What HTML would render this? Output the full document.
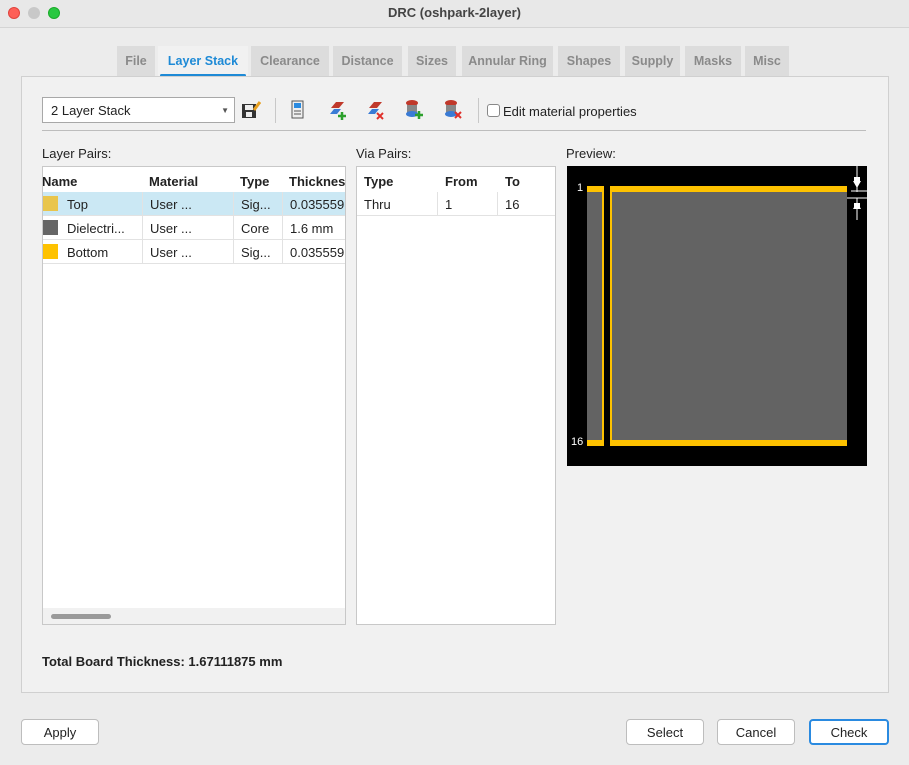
<!DOCTYPE html><html><head><style>
*{box-sizing:border-box;margin:0;padding:0}
body{width:909px;height:765px;background:#ececec;font-family:"Liberation Sans",sans-serif;font-size:13px;color:#222;position:relative;overflow:hidden}
.a{position:absolute}
.title{left:0;top:0;width:909px;height:28px;border-bottom:1px solid #d4d4d4;background:#e8e8e8;text-align:center;line-height:26px;font-weight:bold;font-size:13px;color:#444}
.dot{width:12px;height:12px;border-radius:50%;top:7px}
.tab{top:46px;height:30px;background:#dcdcdc;color:#8a8a8a;font-weight:bold;font-size:12.5px;text-align:center;line-height:31px}
.panel{left:21px;top:76px;width:868px;height:617px;background:#f1f1f1;border:1px solid #d0d0d0}
.tbl{background:#fff;border:1px solid #c8c8c8}
.cell{position:absolute;height:24px;line-height:25px;border-right:1px solid #e2e2e2;border-bottom:1px solid #e2e2e2;padding-left:7px;white-space:nowrap;overflow:hidden}
.hd{font-weight:bold;background:#fff;height:26px;line-height:29px;border:none}
.btn{top:719px;height:26px;background:#fff;border:1px solid #bdbdbd;border-radius:4px;text-align:center;line-height:26px;font-size:13px}
</style></head><body>
<div class="a title">DRC (oshpark-2layer)</div>
<div class="a dot" style="left:8px;background:#fe5f57;border:1px solid #e0443e"></div>
<div class="a dot" style="left:28px;background:#c8c8c8"></div>
<div class="a dot" style="left:48px;background:#28c840;border:1px solid #1aab29"></div>

<div class="a tab" style="left:117px;width:38px">File</div>
<div class="a tab" style="left:158px;width:90px;background:#f1f1f1;color:#1e8ad6">Layer Stack</div>
<div class="a" style="left:160px;top:74px;width:86px;height:3px;background:#1e8ad6;border-radius:2px"></div>
<div class="a tab" style="left:251px;width:78px">Clearance</div>
<div class="a tab" style="left:333px;width:69px">Distance</div>
<div class="a tab" style="left:408px;width:48px">Sizes</div>
<div class="a tab" style="left:462px;width:91px">Annular Ring</div>
<div class="a tab" style="left:558px;width:62px">Shapes</div>
<div class="a tab" style="left:625px;width:55px">Supply</div>
<div class="a tab" style="left:685px;width:56px">Masks</div>
<div class="a tab" style="left:745px;width:44px">Misc</div>

<div class="a panel"></div>
<div class="a" style="left:42px;top:97px;width:193px;height:26px;background:#fff;border:1px solid #a8a8a8;line-height:25px;padding-left:8px">2 Layer Stack<span style="position:absolute;right:5px;font-size:8px;color:#555">▼</span></div>
<svg class="a" style="left:241px;top:100px" width="20" height="20"><rect x="1" y="4" width="14" height="14" fill="#333"/><rect x="4" y="5" width="8" height="5" fill="#eee"/><rect x="5" y="12" width="6" height="5" fill="#eee"/><path d="M13 10 L19 2" stroke="#e8a020" stroke-width="3"/></svg>
<div class="a" style="left:275px;top:98px;width:1px;height:25px;background:#c8c8c8"></div>
<svg class="a" style="left:290px;top:100px" width="16" height="20"><rect x="2" y="1" width="11" height="17" fill="#eee" stroke="#555"/><rect x="4" y="3" width="7" height="5" fill="#2a8ae0"/><path d="M4 11h7M4 14h7" stroke="#555"/></svg>
<svg class="a" style="left:328px;top:100px" width="20" height="20"><path d="M3 8 L8 2 H16 L11 8Z" fill="#c0392b"/><path d="M2 14 L6 9 H13 L9 14Z" fill="#3a7bd5"/><path d="M14 12v8M10 16h8" stroke="#2ca02c" stroke-width="2.5"/></svg>
<svg class="a" style="left:366px;top:100px" width="20" height="20"><path d="M3 8 L8 2 H16 L11 8Z" fill="#c0392b"/><path d="M2 14 L6 9 H13 L9 14Z" fill="#3a7bd5"/><path d="M11 13l6 6M17 13l-6 6" stroke="#e0302a" stroke-width="2"/></svg>
<svg class="a" style="left:404px;top:99px" width="20" height="21"><ellipse cx="8" cy="4" rx="6" ry="3" fill="#c0392b"/><rect x="3" y="6" width="10" height="8" fill="#888"/><ellipse cx="8" cy="15" rx="6" ry="3" fill="#3a7bd5"/><path d="M15 12v8M11 16h8" stroke="#2ca02c" stroke-width="2.5"/></svg>
<svg class="a" style="left:443px;top:99px" width="20" height="21"><ellipse cx="8" cy="4" rx="6" ry="3" fill="#c0392b"/><rect x="3" y="6" width="10" height="8" fill="#888"/><ellipse cx="8" cy="15" rx="6" ry="3" fill="#3a7bd5"/><path d="M12 13l6 6M18 13l-6 6" stroke="#e0302a" stroke-width="2"/></svg>
<div class="a" style="left:478px;top:98px;width:1px;height:25px;background:#c8c8c8"></div>
<div class="a" style="left:487px;top:104px;width:13px;height:13px;background:#fff;border:1px solid #888;border-radius:3px"></div>
<div class="a" style="left:503px;top:104px">Edit material properties</div>
<div class="a" style="left:42px;top:130px;width:824px;height:1px;background:#bdbdbd"></div>

<div class="a" style="left:42px;top:146px">Layer Pairs:</div>
<div class="a" style="left:356px;top:146px">Via Pairs:</div>
<div class="a" style="left:566px;top:146px">Preview:</div>

<div class="a tbl" style="left:42px;top:166px;width:304px;height:459px;overflow:hidden">
<div class="cell hd" style="left:-8px;top:0;width:108px">Name</div>
<div class="cell hd" style="left:99px;top:0;width:91px">Material</div>
<div class="cell hd" style="left:190px;top:0;width:49px">Type</div>
<div class="cell hd" style="left:239px;top:0;width:70px">Thickness</div>
<div class="a" style="left:0;top:25px;width:304px;height:24px;background:#cbe8f4"></div>
<div class="cell" style="left:0;top:25px;width:100px;padding-left:24px">Top</div><div class="a" style="left:0;top:29px;width:15px;height:15px;background:#e9c54c"></div>
<div class="cell" style="left:100px;top:25px;width:91px">User ...</div>
<div class="cell" style="left:191px;top:25px;width:49px">Sig...</div>
<div class="cell" style="left:240px;top:25px;width:70px">0.035559</div>
<div class="cell" style="left:0;top:49px;width:100px;padding-left:24px">Dielectri...</div><div class="a" style="left:0;top:53px;width:15px;height:15px;background:#666"></div>
<div class="cell" style="left:100px;top:49px;width:91px">User ...</div>
<div class="cell" style="left:191px;top:49px;width:49px">Core</div>
<div class="cell" style="left:240px;top:49px;width:70px">1.6 mm</div>
<div class="cell" style="left:0;top:73px;width:100px;padding-left:24px">Bottom</div><div class="a" style="left:0;top:77px;width:15px;height:15px;background:#fec200"></div>
<div class="cell" style="left:100px;top:73px;width:91px">User ...</div>
<div class="cell" style="left:191px;top:73px;width:49px">Sig...</div>
<div class="cell" style="left:240px;top:73px;width:70px">0.035559</div>
<div class="a" style="left:0;top:441px;width:304px;height:18px;background:#f1f1f1"></div>
<div class="a" style="left:8px;top:447px;width:60px;height:5px;background:#9a9a9a;border-radius:3px"></div>
</div>

<div class="a tbl" style="left:356px;top:166px;width:200px;height:459px;overflow:hidden">
<div class="cell hd" style="left:0;top:0;width:81px">Type</div>
<div class="cell hd" style="left:81px;top:0;width:60px">From</div>
<div class="cell hd" style="left:141px;top:0;width:58px">To</div>
<div class="cell" style="left:0;top:25px;width:81px">Thru</div>
<div class="cell" style="left:81px;top:25px;width:60px">1</div>
<div class="cell" style="left:141px;top:25px;width:58px">16</div>
</div>

<div class="a" style="left:567px;top:166px;width:300px;height:300px;background:#000">
<div class="a" style="left:20px;top:20px;width:17px;height:260px;background:#636363"></div>
<div class="a" style="left:43px;top:20px;width:237px;height:260px;background:#636363"></div>
<div class="a" style="left:20px;top:20px;width:17px;height:6px;background:#fec200"></div>
<div class="a" style="left:20px;top:274px;width:17px;height:6px;background:#fec200"></div>
<div class="a" style="left:35px;top:20px;width:2px;height:260px;background:#fec200"></div>
<div class="a" style="left:43px;top:20px;width:237px;height:6px;background:#fec200"></div>
<div class="a" style="left:43px;top:274px;width:237px;height:6px;background:#fec200"></div>
<div class="a" style="left:43px;top:20px;width:2px;height:260px;background:#fec200"></div>
<div class="a" style="left:10px;top:16px;color:#fff;font-size:11px">1</div>
<div class="a" style="left:4px;top:270px;color:#fff;font-size:11px">16</div>
<svg class="a" style="left:280px;top:0" width="20" height="55"><path d="M10 0v26M10 32v22M4 25h16M0 32h20" stroke="#fff"/><path d="M6 15h8l-4 7z M6 43h8l-4-7z" fill="#fff"/><rect x="7" y="11" width="6" height="5" fill="#fff"/><rect x="7" y="37" width="6" height="5" fill="#fff"/></svg>
</div>

<div class="a" style="left:42px;top:654px;font-weight:bold">Total Board Thickness: 1.67111875 mm</div>

<div class="a btn" style="left:21px;width:78px">Apply</div>
<div class="a btn" style="left:626px;width:78px">Select</div>
<div class="a btn" style="left:717px;width:78px">Cancel</div>
<div class="a btn" style="left:809px;width:80px;border:2px solid #2a8ae0;line-height:24px">Check</div>
</body></html>
